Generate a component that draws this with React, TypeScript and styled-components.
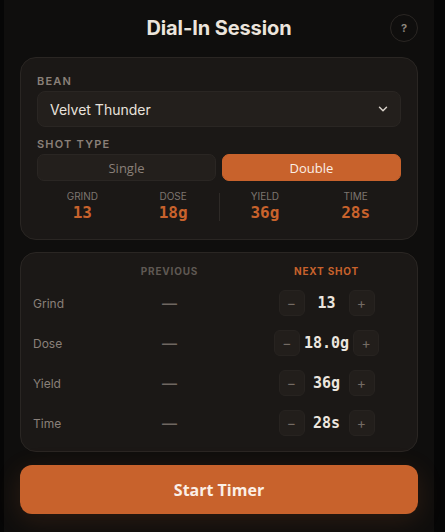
import React, { useState } from "react";
import styled, { createGlobalStyle } from "styled-components";
import { ChevronDown } from "lucide-react";

const Global = createGlobalStyle`
  html, body { margin: 0; padding: 0; background: #060606; }
  * { box-sizing: border-box; }
  body { font-family: Inter, "Noto Sans", sans-serif; -webkit-font-smoothing: antialiased; }
`;

const ORANGE = "#c8622c";
const MONO = `"DejaVu Sans Mono", "Liberation Mono", monospace`;

const Shell = styled.div`
  width: 430px;
  margin-left: 4px;
  min-height: 100vh;
  background: #0f0e0d;
  padding: 12px 16px 20px;
  display: flex;
  flex-direction: column;
`;

const Header = styled.header`
  position: relative;
  height: 32px;
  display: flex;
  align-items: center;
  justify-content: center;
  margin-bottom: 13px;
`;

const Title = styled.h1`
  margin: 0;
  font-size: 20px;
  font-weight: 700;
  color: #ebe4dc;
  letter-spacing: -0.1px;
`;

const HelpButton = styled.button`
  position: absolute;
  right: 0;
  top: 2px;
  width: 28px;
  height: 28px;
  border-radius: 50%;
  border: 1px solid #2a2623;
  background: transparent;
  color: #8c847c;
  font-family: Inter, sans-serif;
  font-size: 11px;
  font-weight: 700;
  display: flex;
  align-items: center;
  justify-content: center;
  padding: 0;
`;

const Card = styled.section<{ $pad: string; $top?: number }>`
  background: #1b1816;
  border: 1px solid #2a2623;
  border-radius: 16px;
  padding: ${(p) => p.$pad};
  margin-top: ${(p) => p.$top ?? 0}px;
`;

const FieldLabel = styled.div<{ $top?: number }>`
  font-size: 11px;
  line-height: 14px;
  font-weight: 600;
  letter-spacing: 0.11em;
  text-transform: uppercase;
  color: #8a8079;
  margin-top: ${(p) => p.$top ?? 0}px;
  margin-bottom: 3px;
`;

const SelectBox = styled.div`
  height: 36px;
  border-radius: 8px;
  background: #231f1c;
  border: 1px solid #2a2623;
  display: flex;
  align-items: center;
  justify-content: space-between;
  padding: 0 10px 0 12px;
  color: #e8e2dc;
  font-size: 14px;
  svg { color: #d9d2ca; }
`;

const Segmented = styled.div`
  display: grid;
  grid-template-columns: 1fr 1fr;
  gap: 6px;
  margin-top: 2px;
`;

const SegButton = styled.button<{ $active: boolean }>`
  height: 27px;
  border-radius: 7px;
  border: 1px solid ${(p) => (p.$active ? ORANGE : "#2a2623")};
  background: ${(p) => (p.$active ? ORANGE : "#231f1c")};
  color: ${(p) => (p.$active ? "#fbefe6" : "#8a8079")};
  font-family: "Open Sans", sans-serif;
  font-size: 13px;
  font-weight: 500;
  padding: 0;
`;

const Stats = styled.div`
  display: grid;
  grid-template-columns: 1fr 1fr 1px 1fr 1fr;
  align-items: center;
  margin-top: 9px;
`;

const Stat = styled.div`
  display: flex;
  flex-direction: column;
  align-items: center;
`;

const StatLabel = styled.div`
  font-size: 10px;
  line-height: 12px;
  color: #7d756f;
  text-transform: uppercase;
`;

const StatValue = styled.div`
  font-family: ${MONO};
  font-weight: 700;
  font-size: 16px;
  line-height: 21px;
  color: ${ORANGE};
`;

const Divider = styled.div`
  width: 1px;
  height: 28px;
  background: #2e2a27;
`;

const Table = styled.div`
  display: grid;
  grid-template-columns: 58px 1fr 1fr;
  row-gap: 14px;
  align-items: center;
`;

const ColHead = styled.div<{ $accent?: boolean }>`
  text-align: center;
  font-size: 10px;
  line-height: 12px;
  font-weight: 700;
  letter-spacing: 0.08em;
  color: ${(p) => (p.$accent ? ORANGE : "#5f5853")};
  margin-bottom: -1px;
`;

const RowLabel = styled.div`
  font-size: 12px;
  color: #8a8079;
`;

const Prev = styled.div`
  text-align: center;
  color: #6f6761;
  font-size: 15px;
  font-weight: 600;
`;

const Stepper = styled.div`
  display: flex;
  align-items: center;
  justify-content: center;
  gap: 4px;
`;

const StepBtn = styled.button`
  width: 26px;
  height: 26px;
  border-radius: 6px;
  border: 1px solid #272320;
  background: #221e1b;
  color: #746b64;
  font-family: Inter, sans-serif;
  font-size: 14px;
  line-height: 1;
  padding: 0;
  display: flex;
  align-items: center;
  justify-content: center;
`;

const StepValue = styled.div`
  min-width: 36px;
  text-align: center;
  font-family: ${MONO};
  font-weight: 700;
  font-size: 15px;
  color: #ece6df;
`;

const StartButton = styled.button`
  margin-top: 13px;
  height: 49px;
  border: none;
  border-radius: 12px;
  background: ${ORANGE};
  color: #fbefe6;
  font-family: "Open Sans", sans-serif;
  font-size: 16px;
  font-weight: 700;
  box-shadow: 0 6px 26px rgba(200, 98, 44, 0.16);
`;

const rows = [
  { label: "Grind", value: "13" },
  { label: "Dose", value: "18.0g" },
  { label: "Yield", value: "36g" },
  { label: "Time", value: "28s" },
];

export default function App() {
  const [shot, setShot] = useState("Double");
  return (
    <>
      <Global />
      <Shell>
        <Header>
          <Title>Dial-In Session</Title>
          <HelpButton>?</HelpButton>
        </Header>

        <Card $pad="16px">
          <FieldLabel>Bean</FieldLabel>
          <SelectBox>
            <span>Velvet Thunder</span>
            <ChevronDown size={14} strokeWidth={2.5} />
          </SelectBox>
          <FieldLabel $top={10}>Shot Type</FieldLabel>
          <Segmented>
            {["Single", "Double"].map((s) => (
              <SegButton key={s} $active={shot === s} onClick={() => setShot(s)}>
                {s}
              </SegButton>
            ))}
          </Segmented>
          <Stats>
            <Stat>
              <StatLabel>Grind</StatLabel>
              <StatValue>13</StatValue>
            </Stat>
            <Stat>
              <StatLabel>Dose</StatLabel>
              <StatValue>18g</StatValue>
            </Stat>
            <Divider />
            <Stat>
              <StatLabel>Yield</StatLabel>
              <StatValue>36g</StatValue>
            </Stat>
            <Stat>
              <StatLabel>Time</StatLabel>
              <StatValue>28s</StatValue>
            </Stat>
          </Stats>
        </Card>

        <Card $pad="12px 12px 15px 12px" $top={12}>
          <Table>
            <div />
            <ColHead>PREVIOUS</ColHead>
            <ColHead $accent>NEXT SHOT</ColHead>
            {rows.map((r) => (
              <React.Fragment key={r.label}>
                <RowLabel>{r.label}</RowLabel>
                <Prev>—</Prev>
                <Stepper>
                  <StepBtn>−</StepBtn>
                  <StepValue>{r.value}</StepValue>
                  <StepBtn>+</StepBtn>
                </Stepper>
              </React.Fragment>
            ))}
          </Table>
        </Card>

        <StartButton>Start Timer</StartButton>
      </Shell>
    </>
  );
}
